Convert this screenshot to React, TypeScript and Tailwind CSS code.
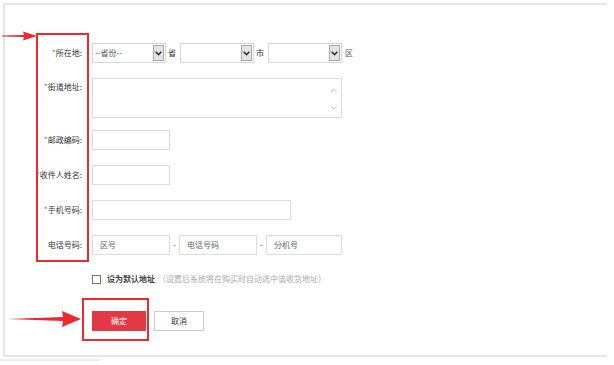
import type { ReactNode } from 'react';

const font = { fontFamily: '"Noto Sans CJK SC", "Noto Sans", sans-serif' };

function Label({ text, required = true }: { text: string; required?: boolean }) {
  return (
    <div className="w-[64px] shrink-0 whitespace-nowrap text-right text-[8px] leading-[20px] text-[#333]">
      {required && <span className="text-[#e4393c]">*</span>}
      {text}:
    </div>
  );
}

function Row({ label, required, className = '', children }: { label: string; required?: boolean; className?: string; children: ReactNode }) {
  return (
    <div className={`flex items-start gap-[10px] ${className}`}>
      <Label text={label} required={required} />
      {children}
    </div>
  );
}

function Select({ text }: { text?: string }) {
  return (
    <div className="flex h-[20px] w-[74px] items-center border border-[#d5d5d5] bg-white">
      <span className="flex-1 pl-[2px] text-[8px] text-[#555]">{text}</span>
      <div className="mr-[1px] flex h-[16px] w-[11px] items-center justify-center border border-[#a8a8a8] bg-[#e4e4e4]">
        <svg width="7" height="5" viewBox="0 0 7 5">
          <path d="M0.7 0.8 L3.5 3.8 L6.3 0.8" fill="none" stroke="#222" strokeWidth="1.4" />
        </svg>
      </div>
    </div>
  );
}

function Input({ w, placeholder }: { w: string; placeholder?: string }) {
  return (
    <div className={`flex h-[20px] ${w} items-center border border-[#dcdcdc] bg-white pl-[7px] text-[8px] text-[#666]`}>
      {placeholder}
    </div>
  );
}

export default function App() {
  return (
    <div className="relative h-[365px] w-[614px] overflow-hidden bg-white" style={font}>
      <div className="ml-[3px] mt-[3px] h-[354px] w-[604px] border-y-2 border-l-2 border-[#e6e6e6] pl-[13px]">
        <Row label="所在地" className="mt-[38px]">
          <div className="flex items-center gap-[2px] text-[8px] text-[#333]">
            <Select text="--省份--" />
            <span className="mr-[2px]">省</span>
            <Select />
            <span className="mr-[2px]">市</span>
            <Select />
            <span className="ml-[1px] text-[#555]">区</span>
          </div>
        </Row>
        <Row label="街道地址" className="mt-[14px]">
          <div className="relative mt-[1px] h-[40px] w-[250px] border border-[#dcdcdc] bg-white">
            <svg className="absolute right-[3px] top-[6px]" width="8" height="28" viewBox="0 0 8 28">
              <path d="M1 7 L4 4 L7 7" fill="none" stroke="#c8c8c8" strokeWidth="1" />
              <path d="M1 21 L4 24 L7 21" fill="none" stroke="#c8c8c8" strokeWidth="1" />
            </svg>
          </div>
        </Row>
        <Row label="邮政编码" className="mt-[12px]">
          <Input w="w-[78px]" />
        </Row>
        <Row label="收件人姓名" className="mt-[15px]">
          <Input w="w-[78px]" />
        </Row>
        <Row label="手机号码" className="mt-[15px]">
          <Input w="w-[199px]" />
        </Row>
        <Row label="电话号码" required={false} className="mt-[15px]">
          <div className="flex items-center text-[8px] text-[#555]">
            <Input w="w-[78px]" placeholder="区号" />
            <span className="w-[9px] text-center">-</span>
            <Input w="w-[78px]" placeholder="电话号码" />
            <span className="w-[9px] text-center">-</span>
            <Input w="w-[76px]" placeholder="分机号" />
          </div>
        </Row>
        <div className="ml-[74px] mt-[18px] flex items-center text-[8px]">
          <div className="h-[9px] w-[9px] border border-[#777] bg-white" />
          <span className="ml-[6px] font-bold text-[#444]">设为默认地址</span>
          <span className="ml-[3px] text-[#aaa]">（设置后系统将在购买时自动选中该收货地址）</span>
        </div>
        <div className="ml-[74px] mt-[26px] flex gap-[8px] text-[8px]">
          <div className="flex h-[20px] w-[54px] items-center justify-center bg-[#e23a44] text-white">确定</div>
          <div className="flex h-[20px] w-[50px] items-center justify-center border border-[#ccc] bg-white text-[#333]">取消</div>
        </div>
      </div>
      <div className="mt-[2px] h-[2px] w-[100px] bg-[#eeeeee]" />

      {/* annotation overlays */}
      <div className="absolute left-[36px] top-[33px] h-[229px] w-[53px] border-2 border-[#ea2a2f]" />
      <div className="absolute left-[82px] top-[298px] h-[43px] w-[67px] border-2 border-[#ea2a2f]" />
      <svg className="absolute left-0 top-[30px]" width="38" height="12" viewBox="0 0 38 12">
        <path d="M2 5.5 L24 5 L23 1.5 L37 6 L23 10.5 L24 7 L2 6.5 Z" fill="#ea2a2f" />
      </svg>
      <svg className="absolute left-[6px] top-[310px]" width="76" height="18" viewBox="0 0 76 18">
        <path d="M1 9 L57 7 L56 1 L75 9 L56 17 L57 11 Z" fill="#ea2a2f" />
      </svg>
    </div>
  );
}
